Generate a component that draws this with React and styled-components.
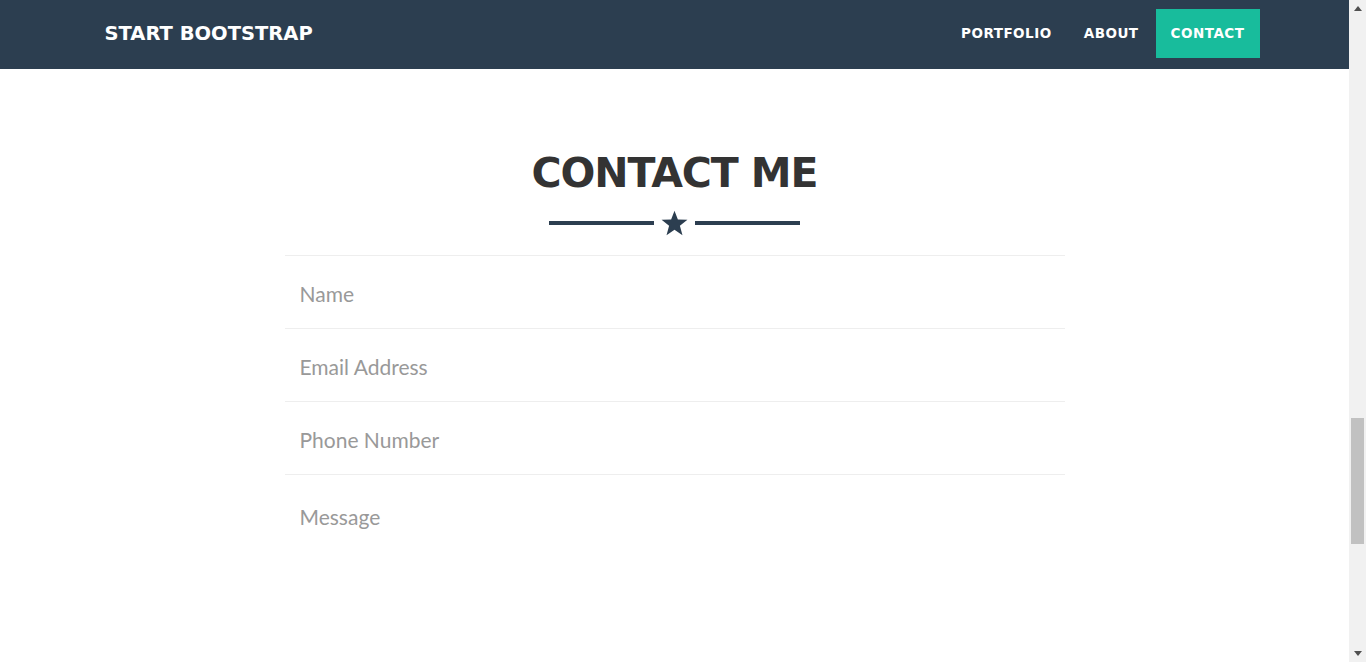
import React from "react";
import styled, { createGlobalStyle } from "styled-components";

const Global = createGlobalStyle`
  html, body {
    margin: 0;
    padding: 0;
    background: #fff;
    overflow: hidden;
  }
  body {
    font-family: Lato, "Open Sans", sans-serif;
    color: #2c3e50;
  }
  * { box-sizing: border-box; }
`;

const Window = styled.div`
  display: flex;
  height: 100vh;
`;

const Page = styled.div`
  flex: 1;
  min-width: 0;
  overflow: hidden;
`;

const ScrollTrack = styled.div`
  width: 17px;
  background: #f1f1f1;
  display: flex;
  flex-direction: column;
  align-items: center;
`;

const ScrollArrow = styled.div`
  height: 17px;
  width: 17px;
  display: flex;
  align-items: center;
  justify-content: center;
`;

const ScrollSpace = styled.div`
  flex: 1;
  width: 100%;
  display: flex;
  flex-direction: column;
  padding: 0 2px;
`;

const ScrollThumb = styled.div`
  margin-top: 401px;
  height: 126px;
  background: #c1c1c1;
`;

const Nav = styled.nav`
  background: #2c3e50;
  height: 69px;
`;

const Container = styled.div`
  width: 1170px;
  margin: 0 auto;
  padding: 0 15px;
  height: 100%;
  display: flex;
  align-items: center;
  justify-content: space-between;
`;

const Brand = styled.a`
  font-family: "DejaVu Sans", sans-serif;
  font-weight: 700;
  font-size: 19.5px;
  color: #fff;
  text-transform: uppercase;
  text-decoration: none;
  margin-top: -2px;
`;

const Menu = styled.ul`
  display: flex;
  list-style: none;
  margin: -2px -15px 0 0;
  padding: 0;
  gap: 2px;
`;

const MenuLink = styled.a`
  display: block;
  padding: 16px 15px 16px;
  line-height: 17px;
  font-family: "DejaVu Sans", sans-serif;
  font-weight: 700;
  font-size: 13.5px;
  letter-spacing: 0.5px;
  text-transform: uppercase;
  text-decoration: none;
  color: #fff;
  background: ${(p) => (p.$active ? "#18bc9c" : "transparent")};
`;

const Section = styled.section`
  padding-top: 80px;
`;

const Column = styled.div`
  width: 780px;
  margin: 0 auto;
`;

const Heading = styled.h2`
  margin: 0;
  text-align: center;
  font-family: "DejaVu Sans", sans-serif;
  font-weight: 700;
  font-size: 41px;
  letter-spacing: -1.1px;
  line-height: 1.2;
  text-transform: uppercase;
  color: #333;
`;

const Divider = styled.div`
  display: flex;
  align-items: center;
  justify-content: center;
  gap: 7px;
  margin: 12px 0 19px;
`;

const Line = styled.span`
  width: 105px;
  height: 4px;
  background: #2c3e50;
`;

const Form = styled.form`
  border-top: 1px solid #eee;
`;

const Field = styled.div`
  border-bottom: ${(p) => (p.$last ? "none" : "1px solid #eee")};
  height: ${(p) => (p.$tall ? "auto" : "73px")};
  display: flex;
  align-items: ${(p) => (p.$tall ? "flex-start" : "center")};
`;

const Input = styled.input`
  width: 100%;
  border: none;
  outline: none;
  background: transparent;
  padding: 2px 15px 0;
  font-family: Lato, sans-serif;
  font-size: 21px;
  color: #333;
  &::placeholder {
    color: #999;
  }
`;

const TextArea = styled.textarea`
  width: 100%;
  border: none;
  outline: none;
  resize: none;
  background: transparent;
  padding: 27px 15px 0;
  font-family: Lato, sans-serif;
  font-size: 21px;
  line-height: 1.4;
  color: #333;
  height: 180px;
  &::placeholder {
    color: #999;
  }
`;

const Star = () => (
  <svg width="27" height="26" viewBox="0 0 24 23">
    <polygon
      points="12,0.5 15,8.3 23.5,8.7 16.8,14 19.1,22.3 12,17.6 4.9,22.3 7.2,14 0.5,8.7 9,8.3"
      fill="#2c3e50"
    />
  </svg>
);

const Arrow = ({ down }) => (
  <svg width="8" height="5" viewBox="0 0 8 5">
    <polygon points={down ? "0,0 8,0 4,5" : "0,5 8,5 4,0"} fill="#505050" />
  </svg>
);

export default function App() {
  return (
    <>
      <Global />
      <Window>
        <Page>
          <Nav>
            <Container>
              <Brand href="#">Start Bootstrap</Brand>
              <Menu>
                <li><MenuLink href="#">Portfolio</MenuLink></li>
                <li><MenuLink href="#">About</MenuLink></li>
                <li><MenuLink href="#" $active>Contact</MenuLink></li>
              </Menu>
            </Container>
          </Nav>
          <Section>
            <Column>
              <Heading>Contact Me</Heading>
              <Divider>
                <Line />
                <Star />
                <Line />
              </Divider>
              <Form>
                <Field><Input placeholder="Name" /></Field>
                <Field><Input placeholder="Email Address" /></Field>
                <Field><Input placeholder="Phone Number" /></Field>
                <Field $tall $last><TextArea placeholder="Message" /></Field>
              </Form>
            </Column>
          </Section>
        </Page>
        <ScrollTrack>
          <ScrollArrow><Arrow /></ScrollArrow>
          <ScrollSpace><ScrollThumb /></ScrollSpace>
          <ScrollArrow><Arrow down /></ScrollArrow>
        </ScrollTrack>
      </Window>
    </>
  );
}
